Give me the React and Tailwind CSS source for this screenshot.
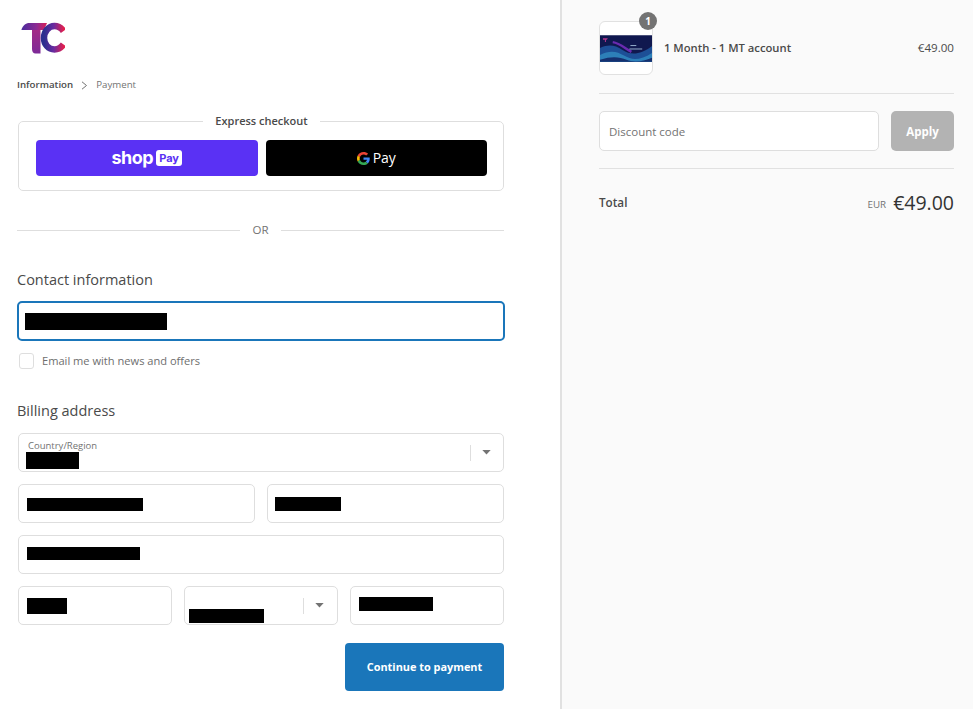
import React from "react";

const Redacted = ({ className }) => <div className={`bg-black ${className}`} />;

const Field = ({ className = "", children }) => (
  <div className={`relative flex h-[39px] items-center rounded-[5px] border border-[#dedede] bg-white ${className}`}>
    {children}
  </div>
);

const SelectArrow = ({ className = "" }) => (
  <div className={`absolute top-0 flex h-full items-center ${className}`}>
    <span className="h-[16px] w-px bg-[#dedede]" />
    <svg className="ml-[11px]" width="9" height="5" viewBox="0 0 10 6">
      <path d="M0 0h10L5 5.500z" fill="#737373" />
    </svg>
  </div>
);

const Logo = () => (
  <svg width="44" height="33" viewBox="0 0 44 33" fill="none">
    <defs>
      <linearGradient id="tBar" x1="0" y1="0" x2="1" y2="0">
        <stop offset="0" stopColor="#4a2c9c" />
        <stop offset="0.6" stopColor="#8e2a92" />
        <stop offset="1" stopColor="#d91f55" />
      </linearGradient>
      <linearGradient id="tStem" x1="0" y1="0" x2="0" y2="1">
        <stop offset="0" stopColor="#a32a86" />
        <stop offset="1" stopColor="#7d2a98" />
      </linearGradient>
      <linearGradient id="cArc" x1="0" y1="0" x2="1" y2="0">
        <stop offset="0" stopColor="#2b2f8f" />
        <stop offset="0.5" stopColor="#6a2ba0" />
        <stop offset="1" stopColor="#e0204f" />
      </linearGradient>
    </defs>
    <path d="M0.500 7.500C2 3.500 4.500 1 8.500 1H26L23 8H0.500Z" fill="url(#tBar)" />
    <path d="M11 8H19.500V31.500H14.500C12.200 31.500 11 29.500 11 27Z" fill="url(#tStem)" />
    <path d="M42.500 9C40 5.500 37 4 33.500 4C27.500 4 23 9.500 23 16C23 22.500 27.500 27.500 33.500 27.500C37 27.500 40 26 42.500 22.500" stroke="url(#cArc)" strokeWidth="6.500" />
  </svg>
);

const GoogleG = () => (
  <svg width="13" height="13" viewBox="0 0 24 24">
    <path d="M12 4.600c2 0 3.700.7 5 2l3.500-3.500C18.300 1.100 15.400 0 12 0 7.300 0 3.200 2.700 1.300 6.600l4 3.100C6.300 6.700 8.900 4.600 12 4.600z" fill="#ea4335" />
    <path d="M23.500 12.300c0-.8-.1-1.600-.2-2.300H12v4.500h6.500c-.3 1.500-1.100 2.700-2.400 3.600l3.900 3c2.200-2.100 3.500-5.200 3.500-8.800z" fill="#4285f4" />
    <path d="M5.300 14.300c-.2-.7-.4-1.500-.4-2.300s.1-1.600.4-2.300l-4-3.100C.5 8.200 0 10 0 12s.5 3.800 1.300 5.400l4-3.100z" fill="#fbbc05" />
    <path d="M12 24c3.200 0 6-1.100 8-2.900l-3.900-3c-1.100.7-2.500 1.200-4.100 1.200-3.100 0-5.700-2.100-6.700-4.900l-4 3.100C3.200 21.300 7.300 24 12 24z" fill="#34a853" />
  </svg>
);

const Thumbnail = () => (
  <svg width="52" height="27" viewBox="0 0 53 27" className="block">
    <rect width="53" height="27" fill="#10184f" />
    <path d="M0 13C9 9 15 10 23 15S40 21 53 11V27H0Z" fill="#1d4f96" />
    <path d="M0 20C10 15 17 16 25 21S42 25 53 18V27H0Z" fill="#2d7fb8" />
    <path d="M0 25C12 21 20 22 27 25S44 27 53 23V27H0Z" fill="#15306f" />
    <path d="M13 7C20 8 25 13 32 17" stroke="#6a2bb0" strokeWidth="2.500" fill="none" />
    <path d="M3 3h5l-1 1.500H6V7H5V4.500H3z" fill="#b5388f" />
    <path d="M31 10.500h6M30 14h13" stroke="#b9d6ee" strokeWidth="0.800" />
  </svg>
);

export default function App() {
  return (
    <div className="flex h-[709px] w-[973px] overflow-hidden bg-white font-['Open_Sans','Noto_Sans',sans-serif] text-[#333333]">
      {/* left column */}
      <div className="w-[562px] shrink-0 border-r-2 border-[#e1e1e1] pl-[18px] pr-[56px]">
        <div className="ml-[3px] pt-[22px]">
          <Logo />
        </div>

        <div className="-ml-px mt-[23px] flex items-center text-[9.700px] leading-[14px]">
          <span className="font-semibold text-[#4a4a4a]">Information</span>
          <svg className="ml-[8px] mr-[8px]" width="7" height="9" viewBox="0 0 7 9" fill="none">
            <path d="M1 .8l4.500 3.700L1 8.200" stroke="#737373" />
          </svg>
          <span className="text-[#737373]">Payment</span>
        </div>

        <fieldset className="mt-[21px] h-[78px] rounded-[5px] border border-[#dedede] pl-[17px] pr-[16px] pt-[11px]">
          <legend className="mx-auto px-[12px] text-[11px] font-semibold leading-[16px] text-[#4a4a4a]">Express checkout</legend>
          <div className="flex gap-[8px]">
            <div className="flex h-[36px] flex-1 items-center justify-center gap-[3px] rounded-[4px] bg-[#5a31f4]">
              <span className="font-['Inter',sans-serif] text-[18px] font-bold leading-none tracking-[-0.5px] text-white">shop</span>
              <span className="rounded-[3px] bg-white px-[3px] py-[1px] font-['Inter',sans-serif] text-[11px] font-bold leading-[14px] text-[#5a31f4]">Pay</span>
            </div>
            <div className="flex h-[36px] flex-1 items-center justify-center gap-[3px] rounded-[4px] bg-black">
              <GoogleG />
              <span className="text-[14px] leading-none text-white">Pay</span>
            </div>
          </div>
        </fieldset>

        <div className="-ml-px mt-[31px] flex items-center gap-[12px] text-[11.500px] leading-[16px] text-[#737373]">
          <span className="h-px flex-1 bg-[#dedede]" />
          OR
          <span className="h-px flex-1 bg-[#dedede]" />
        </div>

        <h2 className="-ml-px mt-[31px] text-[14.500px] leading-[22px] text-[#4a4a4a]">Contact information</h2>

        <div className="-mx-px mt-[10px] flex h-[40px] items-center rounded-[5px] border-2 border-[#1a76ba] pl-[6px]">
          <Redacted className="h-[17px] w-[142px]" />
        </div>

        <div className="mt-[12px] flex items-center gap-[8px] pl-[1px]">
          <span className="h-[16px] w-[15px] rounded-[3px] border border-[#dedede]" />
          <span className="text-[11.100px] leading-[16px] text-[#6e6e6e]">Email me with news and offers</span>
        </div>

        <h2 className="-ml-px mt-[31px] text-[14.500px] leading-[22px] text-[#4a4a4a]">Billing address</h2>

        <Field className="mt-[11px]">
          <div className="pl-[9px] pt-[3px]">
            <div className="text-[9.500px] leading-[12px] text-[#737373]">Country/Region</div>
            <Redacted className="-ml-[2px] h-[17px] w-[53px]" />
          </div>
          <SelectArrow className="right-[12px]" />
        </Field>

        <div className="mt-[12px] grid grid-cols-2 gap-[12px]">
          <Field className="pl-[8px]">
            <Redacted className="mt-[2px] h-[13px] w-[116px]" />
          </Field>
          <Field className="pl-[7px]">
            <Redacted className="h-[14px] w-[66px]" />
          </Field>
        </div>

        <Field className="mt-[12px] pl-[8px]">
          <Redacted className="-mt-[2px] h-[13px] w-[113px]" />
        </Field>

        <div className="mt-[12px] grid grid-cols-3 gap-[12px]">
          <Field className="pl-[8px]">
            <Redacted className="h-[16px] w-[40px]" />
          </Field>
          <Field className="pl-[4px]">
            <Redacted className="mt-[20px] h-[14px] w-[75px]" />
            <SelectArrow className="right-[13px]" />
          </Field>
          <Field className="pl-[8px]">
            <Redacted className="-mt-[3px] h-[14px] w-[74px]" />
          </Field>
        </div>

        <div className="mt-[18px] flex justify-end">
          <div className="flex h-[48px] w-[159px] items-center justify-center rounded-[4px] bg-[#1a76ba] text-[10.900px] font-bold text-white">
            Continue to payment
          </div>
        </div>
      </div>

      {/* order summary */}
      <div className="flex-1 bg-[#fafafa] pl-[37px] pr-[19px]">
        <div className="flex items-center pb-[18px] pt-[21px]">
          <div className="relative flex h-[54px] w-[54px] items-center rounded-[6px] border border-[#e1e1e1] bg-white">
            <Thumbnail />
            <span className="absolute -right-[5px] -top-[10px] flex h-[18px] w-[18px] items-center justify-center rounded-full bg-[#737373] text-[10px] font-bold leading-none text-white">1</span>
          </div>
          <span className="ml-[11px] flex-1 text-[11.250px] font-semibold text-[#4a4a4a]">1 Month - 1 MT account</span>
          <span className="text-[11.600px] text-[#4a4a4a]">€49.00</span>
        </div>

        <div className="h-px bg-[#e1e1e1]" />

        <div className="mt-[17px] flex gap-[12px]">
          <div className="flex h-[40px] flex-1 items-center rounded-[5px] border border-[#dedede] bg-white pl-[9px] pt-[1px] text-[11.500px] text-[#737373]">
            Discount code
          </div>
          <div className="flex h-[40px] w-[63px] items-center justify-center rounded-[5px] bg-[#b3b3b3] pt-[2px] text-[11.500px] font-bold text-white">
            Apply
          </div>
        </div>

        <div className="mt-[17px] h-px bg-[#e1e1e1]" />

        <div className="mt-[20px] flex items-center justify-between">
          <span className="text-[11.700px] font-semibold text-[#4a4a4a]">Total</span>
          <div className="flex items-center">
            <span className="mt-[4px] text-[9.800px] text-[#737373]">EUR</span>
            <span className="ml-[7px] text-[19.500px] font-medium leading-[28px] text-[#333333]">€49.00</span>
          </div>
        </div>
      </div>
    </div>
  );
}
